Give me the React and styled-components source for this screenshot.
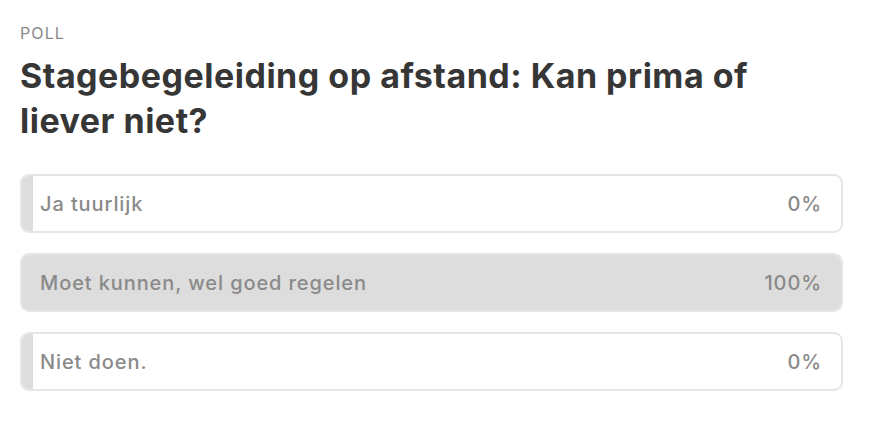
import styled, { createGlobalStyle } from "styled-components";

const GlobalStyle = createGlobalStyle`
  body {
    margin: 0;
    background: #ffffff;
    font-family: Inter, "Noto Sans", sans-serif;
  }
`;

const options = [
  { label: "Ja tuurlijk", percent: 0 },
  { label: "Moet kunnen, wel goed regelen", percent: 100 },
  { label: "Niet doen.", percent: 0 },
];

const App = () => {
  return (
    <>
      <GlobalStyle />
      <Poll>
        <Kicker>POLL</Kicker>
        <Question>Stagebegeleiding op afstand: Kan prima of liever niet?</Question>
        <Options>
          {options.map((option) => (
            <Option key={option.label}>
              <Fill style={{ width: `${option.percent}%` }} />
              <Label>{option.label}</Label>
              <Percent>{option.percent}%</Percent>
            </Option>
          ))}
        </Options>
      </Poll>
    </>
  );
};

export default App;

const Poll = styled.div`
  width: 823px;
  padding: 23px 20px;
`;

const Kicker = styled.div`
  font-size: 16px;
  letter-spacing: 1.1px;
  color: #8a8a8a;
  line-height: 20px;
`;

const Question = styled.h2`
  margin: 10px 0 0;
  width: 760px;
  font-size: 34px;
  font-weight: 700;
  line-height: 45px;
  color: #363636;
  letter-spacing: 0.5px;
`;

const Options = styled.div`
  margin-top: 31px;
  display: flex;
  flex-direction: column;
  gap: 20px;
`;

const Option = styled.div`
  position: relative;
  display: flex;
  align-items: center;
  justify-content: space-between;
  height: 55px;
  padding: 0 19px 0 18px;
  border: 2px solid #e6e6e6;
  border-radius: 9px;
  overflow: hidden;
  background: #ffffff;
`;

const Fill = styled.div`
  position: absolute;
  left: 0;
  top: 0;
  bottom: 0;
  min-width: 11px;
  background: #dddddd;
`;

const Label = styled.span`
  position: relative;
  font-size: 20px;
  font-weight: 500;
  letter-spacing: 0.9px;
  color: #8a8a8a;
`;

const Percent = styled(Label)``;
